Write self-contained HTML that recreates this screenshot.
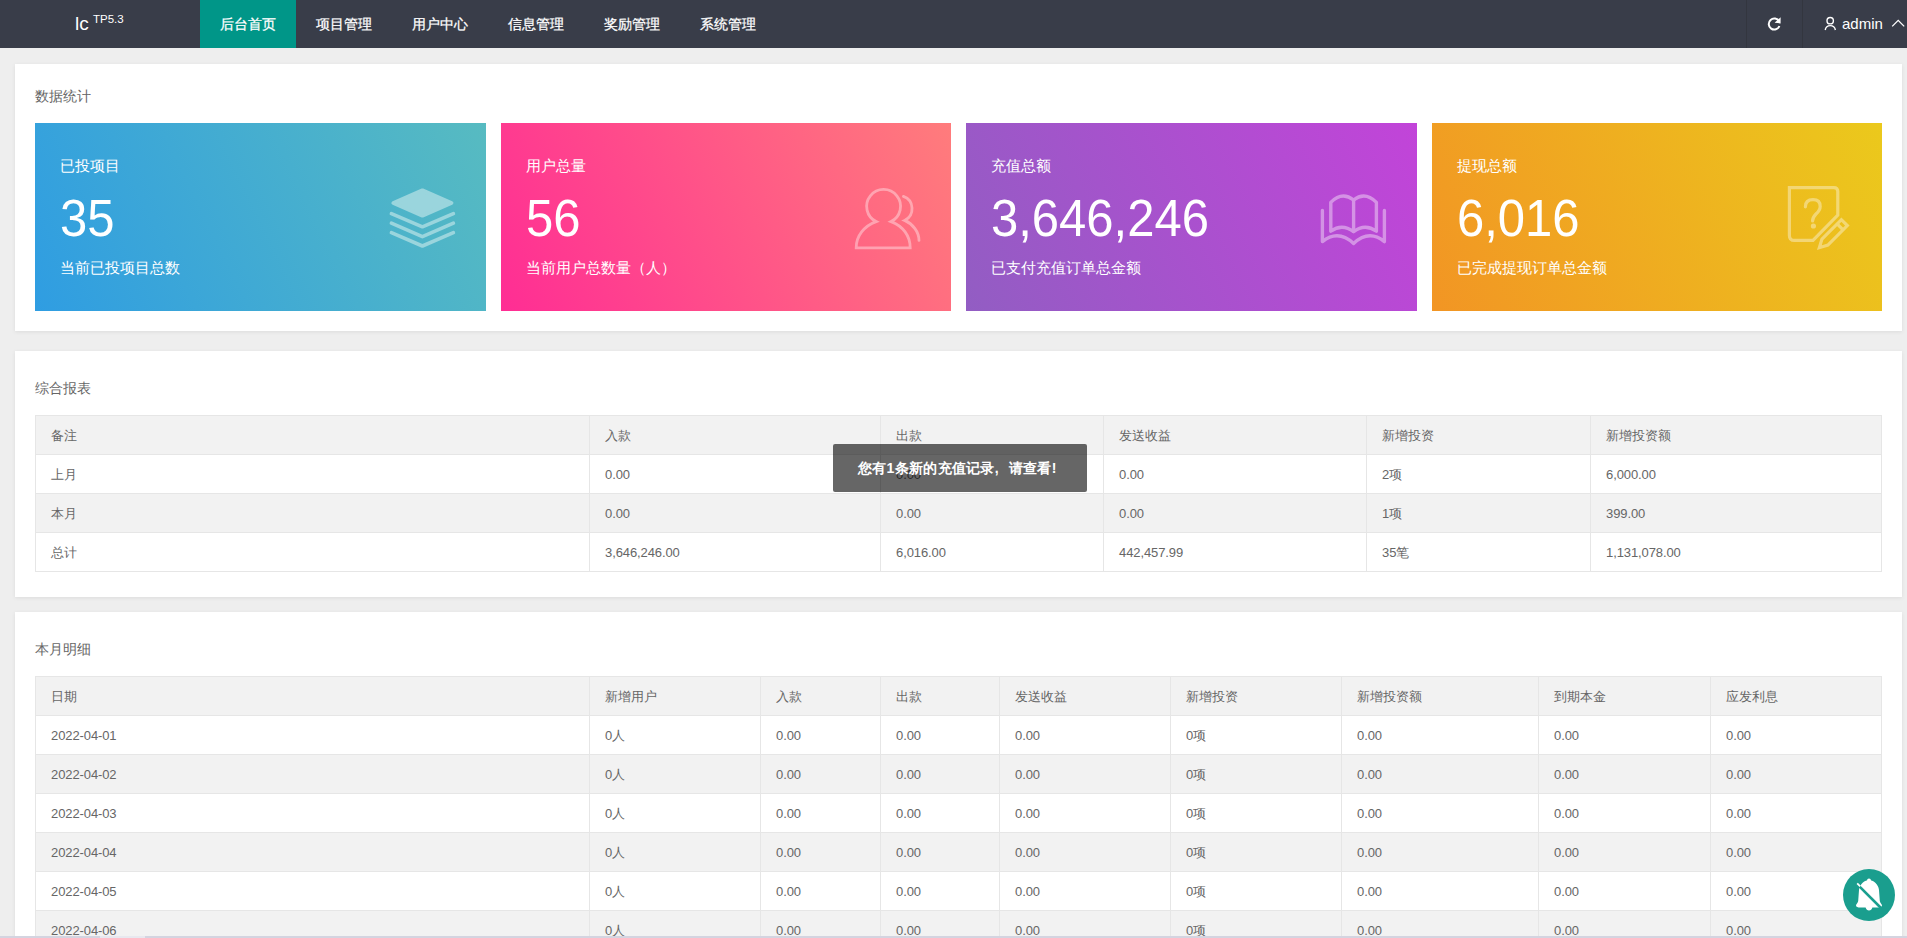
<!DOCTYPE html>
<html><head><meta charset="utf-8">
<style>
*{margin:0;padding:0;box-sizing:border-box}
html,body{width:1907px;height:938px;overflow:hidden}
body{background:#eeeeee;font-family:"Liberation Sans",sans-serif;position:relative;color:#666}
.hd{position:absolute;left:0;top:0;width:1907px;height:48px;background:#393D49}
.logo{position:absolute;left:75px;top:0;height:48px;color:#fff}
.logo .lc{position:absolute;left:0;top:13px;font-size:19px;line-height:22px}
.logo .tp{position:absolute;left:18px;top:12px;font-size:11.5px;line-height:14px}
.nav{position:absolute;left:200px;top:0;height:48px}
.nav a{float:left;width:96px;height:48px;line-height:48px;text-align:center;color:#fff;font-size:14px;text-decoration:none;-webkit-text-stroke:0.25px #fff}
.nav a.on{background:#009688}
.sep{position:absolute;top:0;width:1px;height:48px;background:#33363f}
.rt{position:absolute;top:0;height:48px;color:#fff}
.panel{position:absolute;left:15px;width:1887px;background:#fff;box-shadow:0 1px 4px rgba(0,0,0,.08)}
.ptitle{position:absolute;left:20px;font-size:14px;line-height:20px;color:#666}
.card{position:absolute;top:59px;width:451px;height:188px;color:#fff}
.card .t{position:absolute;left:25px;top:33px;font-size:15px;line-height:20px}
.card .n{position:absolute;left:25px;top:65px;font-size:49px;line-height:56px;transform:scaleY(1.07);transform-origin:0 0}
.card .s{position:absolute;left:25px;top:135px;font-size:15px;line-height:20px}
.card svg{position:absolute}
table{position:absolute;left:20px;border-collapse:collapse;table-layout:fixed;font-size:13px;letter-spacing:-0.1px;color:#666}
td,th{border:1px solid #e6e6e6;height:39px;padding:2px 15px 0;font-weight:normal;text-align:left;white-space:nowrap;line-height:20px}
tr.g td,tr.g th{background:#f2f2f2}
.toast{position:absolute;left:833px;top:444px;width:254px;height:48px;background:rgba(0,0,0,.6);border-radius:2px;color:#fff;font-size:14px;line-height:48px;text-align:left;padding-left:25px;font-weight:bold;letter-spacing:0.3px}
.bell{position:absolute;left:1843px;top:869px;width:52px;height:52px;border-radius:50%;background:#1a9e8e}
</style></head><body>
<div class="hd">
  <div class="logo"><span class="lc">lc</span><span class="tp">TP5.3</span></div>
  <div class="nav">
    <a class="on">后台首页</a><a>项目管理</a><a>用户中心</a><a>信息管理</a><a>奖励管理</a><a>系统管理</a>
  </div>
  <div class="sep" style="left:1746px"></div>
  <div class="sep" style="left:1802px"></div>
  <svg style="position:absolute;left:1760px;top:10px" width="147" height="30" viewBox="1760 10 147 30">
    <path d="M1779.1,21.4 A5.5,5.5 0 1 0 1779.4,26" fill="none" stroke="#fff" stroke-width="2"/>
    <path d="M1780.6,17.2 L1780.6,23.4 L1774.6,22.8 Z" fill="#fff"/>
    <circle cx="1830.2" cy="20.7" r="3.2" fill="none" stroke="#fff" stroke-width="1.4"/>
    <path d="M1825.2,30 A5.2,5.4 0 0 1 1835.4,30" fill="none" stroke="#fff" stroke-width="1.4"/>
    <path d="M1892.2,26.4 L1898.2,20.4 L1904.2,26.4" fill="none" stroke="#fff" stroke-width="1.3"/>
  </svg>
  <div class="rt" style="left:1842px;top:0;font-size:15px;line-height:48px">admin</div>
</div>

<div class="panel" style="top:64px;height:267px">
  <div class="ptitle" style="top:22px">数据统计</div>
  <div class="card" style="left:20px;background:linear-gradient(64deg,#2F9DE2,#57BBC1)">
    <div class="t">已投项目</div><div class="n">35</div><div class="s">当前已投项目总数</div>
    <svg style="left:345px;top:57px" width="85" height="75" viewBox="380 180 85 75">
      <g fill="rgba(255,255,255,.42)" stroke="rgba(255,255,255,0)">
      <path d="M393.4,203 L422.4,190.4 L451.4,203 L422.4,215.6 Z" stroke="#9ad5dd" stroke-width="4" stroke-linejoin="round" fill="#9ad5dd"/>
      </g>
      <g fill="none" stroke="#9ad5dd" stroke-width="3.6" stroke-linecap="round" stroke-linejoin="round">
      <path d="M391.4,213.6 L422.4,226.8 L453.4,213.6"/>
      <path d="M391.4,223.2 L422.4,236.6 L453.4,223.2"/>
      <path d="M391.4,232.6 L422.4,246 L453.4,232.6"/>
      </g>
    </svg>
  </div>
  <div class="card" style="left:486px;width:450px;background:linear-gradient(64deg,#FF2D94,#FF7C7C)">
    <div class="t">用户总量</div><div class="n">56</div><div class="s">当前用户总数量（人）</div>
    <svg style="left:344px;top:57px" width="85" height="75" viewBox="845 180 85 75">
      <g fill="none" stroke="#fff" opacity=".38" stroke-width="2.8" stroke-linejoin="miter">
      <path d="M876.2,221.6 A16.95,16.95 0 1 1 891,221.6 C903,226 910.2,236 910.2,247.8 L856.2,247.8 C856.2,236 864,226 876.2,221.6 Z"/>
      <path d="M903.4,196.4 A13,13 0 0 1 904.6,220.4 C913,224 919,232 919,240.4" stroke-linecap="round"/>
      </g>
    </svg>
  </div>
  <div class="card" style="left:951px;background:linear-gradient(64deg,#925DC3,#C244D9)">
    <div class="t">充值总额</div><div class="n">3,646,246</div><div class="s">已支付充值订单总金额</div>
    <svg style="left:344px;top:57px" width="85" height="75" viewBox="1310 180 85 75">
      <g fill="none" stroke="#fff" opacity=".4" stroke-width="3.4" stroke-linecap="round" stroke-linejoin="round">
      <path d="M1330.8,231.2 L1330.8,202.4 Q1342,191 1353.6,200 Q1365,191 1376.4,202.4 L1376.4,231.2 Q1365,223 1353.6,231.6 Q1342,223 1330.8,231.2 Z"/>
      <path d="M1353.6,200 L1353.6,231.6"/>
      <path d="M1322.4,210.4 L1322.4,241.6 Q1338,229 1353.6,243.4 Q1369,229 1384.4,241.6 L1384.4,210.4"/>
      </g>
    </svg>
  </div>
  <div class="card" style="left:1417px;width:450px;background:linear-gradient(64deg,#F29524,#EBC91C)">
    <div class="t">提现总额</div><div class="n">6,016</div><div class="s">已完成提现订单总金额</div>
    <svg style="left:343px;top:57px" width="85" height="75" viewBox="1775 180 85 75">
      <g opacity=".38"><g fill="none" stroke="#fff" stroke-width="3.2">
      <path d="M1789.4,187.6 L1833.8,187.6 Q1837.8,187.6 1837.8,191.6 L1837.8,215.2 L1813,240.4 L1794.4,240.4 Q1789.4,240.4 1789.4,235.4 Z"/>
      <path d="M1805.4,206.8 Q1805.4,199.6 1813,199.6 Q1820.2,199.6 1820.2,206.4 Q1820.2,210 1816,214 Q1812.6,217.4 1812.6,221" stroke-linecap="round"/>
      <g transform="translate(1818.2,248.8) rotate(-45)">
        <path d="M1.6,0 L9.5,-4.2 L37,-4.2 L37,4.2 L9.5,4.2 Z"/>
        <path d="M31,-4.2 L31,4.2"/>
      </g>
      </g>
      <circle cx="1813.4" cy="226" r="2.6" fill="#fff"/></g>
    </svg>
  </div>
</div>

<div class="panel" style="top:351px;height:246px">
  <div class="ptitle" style="top:27px">综合报表</div>
  <table style="top:64px;width:1847px">
    <colgroup><col style="width:554px"><col style="width:291px"><col style="width:223px"><col style="width:263px"><col style="width:224px"><col style="width:291px"></colgroup>
    <tr class="g"><th>备注</th><th>入款</th><th>出款</th><th>发送收益</th><th>新增投资</th><th>新增投资额</th></tr>
    <tr><td>上月</td><td>0.00</td><td>0.00</td><td>0.00</td><td>2项</td><td>6,000.00</td></tr>
    <tr class="g"><td>本月</td><td>0.00</td><td>0.00</td><td>0.00</td><td>1项</td><td>399.00</td></tr>
    <tr><td>总计</td><td>3,646,246.00</td><td>6,016.00</td><td>442,457.99</td><td>35笔</td><td>1,131,078.00</td></tr>
  </table>
</div>

<div class="panel" style="top:612px;height:400px">
  <div class="ptitle" style="top:27px">本月明细</div>
  <table style="top:64px;width:1847px">
    <colgroup><col style="width:554px"><col style="width:171px"><col style="width:120px"><col style="width:119px"><col style="width:171px"><col style="width:171px"><col style="width:197px"><col style="width:172px"><col style="width:171px"></colgroup>
    <tr class="g"><th>日期</th><th>新增用户</th><th>入款</th><th>出款</th><th>发送收益</th><th>新增投资</th><th>新增投资额</th><th>到期本金</th><th>应发利息</th></tr>
    <tr><td>2022-04-01</td><td>0人</td><td>0.00</td><td>0.00</td><td>0.00</td><td>0项</td><td>0.00</td><td>0.00</td><td>0.00</td></tr>
    <tr class="g"><td>2022-04-02</td><td>0人</td><td>0.00</td><td>0.00</td><td>0.00</td><td>0项</td><td>0.00</td><td>0.00</td><td>0.00</td></tr>
    <tr><td>2022-04-03</td><td>0人</td><td>0.00</td><td>0.00</td><td>0.00</td><td>0项</td><td>0.00</td><td>0.00</td><td>0.00</td></tr>
    <tr class="g"><td>2022-04-04</td><td>0人</td><td>0.00</td><td>0.00</td><td>0.00</td><td>0项</td><td>0.00</td><td>0.00</td><td>0.00</td></tr>
    <tr><td>2022-04-05</td><td>0人</td><td>0.00</td><td>0.00</td><td>0.00</td><td>0项</td><td>0.00</td><td>0.00</td><td>0.00</td></tr>
    <tr class="g"><td>2022-04-06</td><td>0人</td><td>0.00</td><td>0.00</td><td>0.00</td><td>0项</td><td>0.00</td><td>0.00</td><td>0.00</td></tr>
  </table>
</div>

<div class="toast">您有1条新的充值记录<span style="display:inline-block;width:14px">,</span>请查看!</div>
<div class="bell"></div>
<svg style="position:absolute;left:1837px;top:862px" width="65" height="65" viewBox="1837 862 65 65">
  <path d="M1869,880 C1865,880 1859.5,884 1859,890 L1858.2,901 C1858,903 1856,904 1856,905.4 C1856,906.8 1858,907.4 1860,907.4 L1865.6,907.4 Q1866.5,910.4 1869,910.4 Q1871.5,910.4 1872.4,907.4 L1878,907.4 C1880,907.4 1882,906.8 1882,905.4 C1882,904 1880,903 1879.8,901 L1879,890 C1878.5,884 1873,880 1869,880 Z" fill="#fff"/>
  <circle cx="1869" cy="880.6" r="2" fill="#fff"/>
  <path d="M1858.6,885.6 L1881,908" stroke="#1a9f8f" stroke-width="2.6"/>
  <path d="M1857.2,883.4 L1860.2,886.4" stroke="#fff" stroke-width="1.8"/>
</svg>
<div style="position:absolute;left:0;top:936px;width:1907px;height:2px;background:#d4d4e0"></div><div style="position:absolute;left:100px;top:936px;width:45px;height:2px;background:#e8e8ef"></div>
</body></html>
